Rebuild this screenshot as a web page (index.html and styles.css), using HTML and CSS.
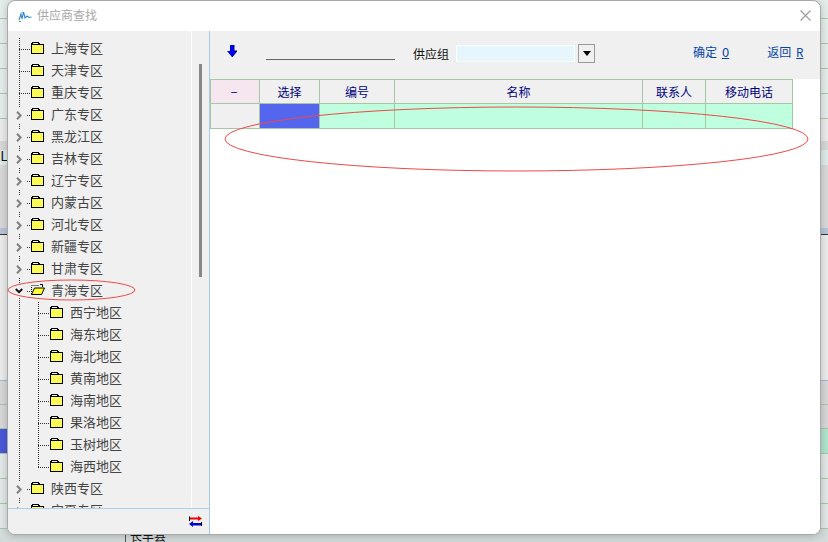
FILE: index.html
```html
<!DOCTYPE html>
<html lang="zh">
<head>
<meta charset="utf-8">
<title>供应商查找</title>
<link rel="stylesheet" href="styles.css">
</head>
<body>
<svg class="defs" width="0" height="0" aria-hidden="true">
  <defs>
    <pattern id="dither" width="2" height="2" patternUnits="userSpaceOnUse">
      <rect width="2" height="2" fill="#ffff00" shape-rendering="crispEdges"/>
      <rect width="1" height="1" fill="#ffffb0" shape-rendering="crispEdges"/>
      <rect x="1" y="1" width="1" height="1" fill="#ffffb0" shape-rendering="crispEdges"/>
    </pattern>
    <symbol id="folder" viewBox="0 0 13 12">
      <path d="M1 3H12V11H1Z" fill="url(#dither)"/>
      <path d="M.5 11.5V1.5H1.5V.5H7.5V1.5H8.5V2.5H12.5V11.5Z M.5 2.5H8.5" fill="none" stroke="#000" shape-rendering="crispEdges"/>
      <path d="M0 11H13V12H0Z M12 3H13V12H12Z" fill="#000" shape-rendering="crispEdges"/>
    </symbol>
    <symbol id="folder-open" viewBox="0 0 14 11">
      <path d="M.5 10V3M.5 1.5H7.5" fill="none" stroke="#000" stroke-dasharray="1 1"/>
      <path d="M3.5 4H13.5L10.5 10.5H.5Z" fill="#ffff20" stroke="#000"/>
      <path d="M5 6.5H10M4 8.5H8" stroke="#ffffd0" stroke-dasharray="1 1"/>
      <path d="M9 .5H11.5V3" fill="none" stroke="#000"/>
    </symbol>
    <symbol id="chev" viewBox="0 0 6 9">
      <path d="M1 .8L4.6 4.5L1 8.2" fill="none" stroke="#808080" stroke-width="2"/>
    </symbol>
  </defs>
</svg>

<div class="backdrop">
  <div class="bd-row bd-h18"></div>
  <div class="bd-row"></div>
  <div class="bd-row"></div>
  <div class="bd-row"></div>
  <div class="bd-row"></div>
  <div class="bd-gap"></div>
  <div class="bd-band"><span class="bd-li">Li</span></div>
  <div class="bd-blue"></div>
  <div class="bd-plain"></div>
  <div class="bd-row bd-grey"></div>
  <div class="bd-row bd-grey bd-last"></div>
  <div class="bd-split"><div class="bd-sel"></div><div class="bd-green"></div></div>
  <div class="bd-row bd-soft"></div>
  <div class="bd-row bd-soft"></div>
  <div class="bd-row bd-soft"></div>
  <div class="bd-foot"><span class="bd-cell">长丰县</span></div>
</div>

<section class="dialog">
  <header class="titlebar">
    <svg class="app-icon" width="14" height="11" viewBox="0 0 14 11">
      <path d="M1 9L3 3L4 8L5.5 1L7 7L9 5L11 6.5L13.5 6" fill="none" stroke="#2f86d8" stroke-width="1.1"/>
      <path d="M1 10.5H3" stroke="#23b04a" stroke-width="1"/>
      <path d="M3.5 1.5H5" stroke="#7cc0ee" stroke-width="1"/>
    </svg>
    <h1 class="title">供应商查找</h1>
    <svg class="close" width="11" height="11" viewBox="0 0 11 11">
      <path d="M.5 .5L10.5 10.5M10.5 .5L.5 10.5" stroke="#9a9a9a" stroke-width="1.1" fill="none"/>
    </svg>
  </header>

  <div class="content">
    <aside class="side">
      <div class="tree-wrap">
        <ul class="tree">
          <li class="row"><svg class="folder"><use href="#folder"/></svg><span class="label">上海专区</span></li>
          <li class="row"><svg class="folder"><use href="#folder"/></svg><span class="label">天津专区</span></li>
          <li class="row"><svg class="folder"><use href="#folder"/></svg><span class="label">重庆专区</span></li>
          <li class="row exp"><svg class="chev"><use href="#chev"/></svg><svg class="folder"><use href="#folder"/></svg><span class="label">广东专区</span></li>
          <li class="row exp"><svg class="chev"><use href="#chev"/></svg><svg class="folder"><use href="#folder"/></svg><span class="label">黑龙江区</span></li>
          <li class="row exp"><svg class="chev"><use href="#chev"/></svg><svg class="folder"><use href="#folder"/></svg><span class="label">吉林专区</span></li>
          <li class="row exp"><svg class="chev"><use href="#chev"/></svg><svg class="folder"><use href="#folder"/></svg><span class="label">辽宁专区</span></li>
          <li class="row exp"><svg class="chev"><use href="#chev"/></svg><svg class="folder"><use href="#folder"/></svg><span class="label">内蒙古区</span></li>
          <li class="row exp"><svg class="chev"><use href="#chev"/></svg><svg class="folder"><use href="#folder"/></svg><span class="label">河北专区</span></li>
          <li class="row exp"><svg class="chev"><use href="#chev"/></svg><svg class="folder"><use href="#folder"/></svg><span class="label">新疆专区</span></li>
          <li class="row exp"><svg class="chev"><use href="#chev"/></svg><svg class="folder"><use href="#folder"/></svg><span class="label">甘肃专区</span></li>
          <li class="row exp open">
            <svg class="chev-down" viewBox="0 0 8 6"><path d="M.8 1L4 4.2L7.2 1" fill="none" stroke="#111" stroke-width="2"/></svg>
            <svg class="folder folder-o"><use href="#folder-open"/></svg><span class="label">青海专区</span>
          </li>
          <li class="row sub"><svg class="folder"><use href="#folder"/></svg><span class="label">西宁地区</span></li>
          <li class="row sub"><svg class="folder"><use href="#folder"/></svg><span class="label">海东地区</span></li>
          <li class="row sub"><svg class="folder"><use href="#folder"/></svg><span class="label">海北地区</span></li>
          <li class="row sub"><svg class="folder"><use href="#folder"/></svg><span class="label">黄南地区</span></li>
          <li class="row sub"><svg class="folder"><use href="#folder"/></svg><span class="label">海南地区</span></li>
          <li class="row sub"><svg class="folder"><use href="#folder"/></svg><span class="label">果洛地区</span></li>
          <li class="row sub"><svg class="folder"><use href="#folder"/></svg><span class="label">玉树地区</span></li>
          <li class="row sub sub-last"><svg class="folder"><use href="#folder"/></svg><span class="label">海西地区</span></li>
          <li class="row exp"><svg class="chev"><use href="#chev"/></svg><svg class="folder"><use href="#folder"/></svg><span class="label">陕西专区</span></li>
          <li class="row exp"><svg class="chev"><use href="#chev"/></svg><svg class="folder"><use href="#folder"/></svg><span class="label">宁夏专区</span></li>
        </ul>
        <div class="gutter"><div class="thumb"></div></div>
      </div>
      <footer class="side-foot">
        <svg width="13" height="11" viewBox="0 0 13 11">
          <path d="M0 1.5H9V0L13 2.5L9 5V3.5H0Z" fill="#f00000"/>
          <path d="M13 7H4V5L0 8L4 11V9.5H13Z" fill="#0000c8"/>
          <path d="M.5 .5V5M12.5 6V10" stroke="#000" stroke-width="1"/>
        </svg>
      </footer>
    </aside>

    <main class="main">
      <div class="toolbar">
        <svg class="down" width="10" height="12" viewBox="0 0 10 12">
          <path d="M3 0H7V6H10L5 12L0 6H3Z" fill="#0000f0"/>
          <path d="M7 0V6H10L5 12" fill="none" stroke="#000080" stroke-width="1"/>
        </svg>
        <span class="line-input"></span>
        <span class="group-label">供应组</span>
        <span class="combo"><span class="combo-field"></span><span class="combo-btn"><span class="tri"></span></span></span>
        <span class="actions">
          <a class="act">确定<u class="key">O</u></a>
          <a class="act">返回<u class="key">R</u></a>
        </span>
      </div>
      <table class="grid">
        <colgroup><col class="c1"><col class="c2"><col class="c3"><col class="c4"><col class="c5"><col class="c6"></colgroup>
        <thead>
          <tr><th class="minus">−</th><th>选择</th><th>编号</th><th>名称</th><th>联系人</th><th>移动电话</th></tr>
        </thead>
        <tbody>
          <tr><td class="idx"></td><td class="pick"></td><td></td><td></td><td></td><td></td></tr>
        </tbody>
      </table>
    </main>
  </div>
</section>

<svg class="marks" width="828" height="542" viewBox="0 0 828 542" aria-hidden="true">
  <ellipse cx="516.5" cy="139" rx="291.5" ry="32" fill="none" stroke="#f04848" stroke-width="1"/>
  <ellipse cx="71.5" cy="290" rx="63.5" ry="10" fill="none" stroke="#f04848" stroke-width="1"/>
</svg>
</body>
</html>
```

FILE: styles.css
```css
* { box-sizing: border-box; }
html, body { margin: 0; padding: 0; }
body {
  position: relative;
  width: 828px;
  height: 542px;
  overflow: hidden;
  background: #e8efed;
  font-family: "Noto Sans CJK SC", "Liberation Sans", sans-serif;
}
.defs { position: absolute; }

/* window behind the dialog */
.backdrop { display: flex; flex-direction: column; height: 542px; }
.bd-row { height: 25px; flex: none; border-bottom: 1px solid #a8c8a8; background: #e6eeec; }
.bd-h18 { height: 19px; }
.bd-gap { height: 22px; flex: none; background: #ececec; }
.bd-band { height: 87px; flex: none; background: #d9d9d9; padding-top: 9px; }
.bd-li {
  display: block; height: 15px; width: 100%; background: #dfecec; color: #111;
  font: 14px/15px "Liberation Mono", monospace;
}
.bd-blue { height: 7px; flex: none; background: #b8c6da; border-bottom: 1px solid #333; }
.bd-plain { height: 146px; flex: none; background: #ececec; border-bottom: 1px solid #9db8dc; }
.bd-grey { background: #d8d8d8; height: 24px; }
.bd-last { height: 24px; }
.bd-split { display: flex; height: 25px; flex: none; border-bottom: 1px solid #a8c8a8; }
.bd-sel { flex: 1; background: #4a58d8; }
.bd-green { flex: 1; background: #aee6cc; }
.bd-soft { background: #e2e9e8; }
.bd-foot { flex: 1; background: #d3dcda; padding-left: 125px; overflow: hidden; }
.bd-cell {
  display: block; height: 14px; border-left: 1px solid #555; padding-left: 4px;
  font-size: 12px; line-height: 14px; color: #111;
}

/* dialog */
.dialog {
  position: absolute;
  left: 7px; top: 0;
  width: 814px; height: 535px;
  display: flex; flex-direction: column;
  background: #fff;
  border: 1px solid #a9a9a9;
  border-radius: 8px;
  overflow: hidden;
  box-shadow: 0 1px 8px rgba(0, 0, 0, .22);
}
.titlebar { height: 30px; flex: none; display: flex; align-items: center; padding: 0 9px 0 10px; }
.app-icon { flex: none; }
.title { flex: 1; margin: -2px 0 0 5px; font-size: 12px; font-weight: 400; color: #a8a8a8; line-height: 28px; }
.close { flex: none; margin-top: -1px; }

.content { flex: 1; display: flex; min-height: 0; }
.side {
  width: 202px; flex: none; display: flex; flex-direction: column;
  background: #f0f0f0; border-right: 1px solid #a8c8e8;
}
.tree-wrap { flex: 1; min-height: 0; display: flex; overflow: hidden; }
.tree {
  list-style: none; margin: 0; padding: 7px 0 0 0;
  width: 184px; flex: none;
  border-right: 1px solid #fff;
  overflow: hidden;
}
.gutter { flex: 1; padding: 33px 6px 0 7px; }
.thumb { height: 213px; width: 3px; background: #888; }

.row {
  height: 22px; display: flex; align-items: center; position: relative; padding-left: 23px;
  --dv: repeating-linear-gradient(to bottom, #333 0 1px, transparent 1px 2px);
  --dh: repeating-linear-gradient(to right, #333 0 1px, transparent 1px 2px);
  background-image: var(--dv), var(--dh);
  background-position: 11px 0, 11px 11px;
  background-size: 1px 22px, 11px 1px;
  background-repeat: no-repeat;
}
.exp { background-position: 11px 0, 19px 11px; background-size: 1px 22px, 4px 1px; }
.sub {
  padding-left: 42px;
  background-image: var(--dv), var(--dv), var(--dh);
  background-position: 11px 0, 30px 0, 30px 11px;
  background-size: 1px 22px, 1px 22px, 12px 1px;
}
.sub-last { background-size: 1px 22px, 1px 11px, 12px 1px; }
.folder { width: 13px; height: 12px; flex: none; margin-top: -2px; }
.folder-o { width: 14px; height: 11px; margin-top: -3px; margin-right: -1px; }
.label { margin: -2px 0 0 7px; font-size: 13px; line-height: 22px; color: #444; white-space: nowrap; }
.chev, .chev-down { position: absolute; background: #f0f0f0; box-shadow: 0 0 0 3px #f0f0f0; }
.chev { left: 8px; top: 7px; width: 6px; height: 9px; }
.chev-down { left: 7px; top: 8px; width: 8px; height: 6px; }

.side-foot {
  height: 26px; flex: none; display: flex; justify-content: flex-end; align-items: center;
  padding: 0 7px 0 0; border-top: 1px solid #a8cfee;
}

/* right side */
.main { flex: 1; min-width: 0; background: #fff; }
.toolbar { height: 48px; display: flex; align-items: flex-start; background: #f0f0f0; font-size: 12px; }
.down { margin: 14px 0 0 17px; flex: none; }
.line-input { width: 129px; height: 29px; margin-left: 29px; border-bottom: 1px solid #666; flex: none; }
.group-label { margin: 14px 0 0 18px; color: #111; line-height: 18px; flex: none; }
.combo { display: flex; margin: 13px 0 0 6px; flex: none; }
.combo-field {
  width: 121px; height: 19px; background: #e6f6fc;
  border: 2px solid #fff; outline: 1px solid #e8f0f2; outline-offset: -1px;
}
.combo-btn {
  width: 17px; height: 19px; margin-left: 2px; background: #f0f0f0;
  border: 1px solid #999; display: flex; align-items: center; justify-content: center;
}
.tri { width: 0; height: 0; border: 4px solid transparent; border-top: 5px solid #000; border-bottom: 0; }
.actions { display: flex; gap: 38px; margin: 12px 0 0 98px; flex: none; }
.act { color: #0645ad; line-height: 17px; white-space: nowrap; }
.key { font: 12px/17px "Liberation Mono", monospace; margin-left: 5px; }

.grid { border-collapse: separate; border-spacing: 0; table-layout: fixed; width: 583px; }
.c1 { width: 50px; } .c2 { width: 60px; } .c3 { width: 75px; }
.c4 { width: 248px; } .c5 { width: 63px; } .c6 { width: 87px; }
.grid th, .grid td { border-right: 1px solid #a4c8a4; border-bottom: 1px solid #a4c8a4; padding: 0; }
.grid th {
  background: #f0f0f0; border-top: 1px solid #a4c8a4; height: 25px;
  font-size: 12px; font-weight: 400; color: #000080; line-height: 22px;
}
.grid td { height: 25px; background: #bfffdf; }
.grid th:first-child, .grid td:first-child { border-left: 1px solid #a4c8a4; }
.grid .minus { background: #f5e6f0; padding-right: 2px; }
.grid .idx { background: #f0f0f0; }
.grid .pick { background: #5566ee; }

.marks { position: absolute; left: 0; top: 0; pointer-events: none; }
```
